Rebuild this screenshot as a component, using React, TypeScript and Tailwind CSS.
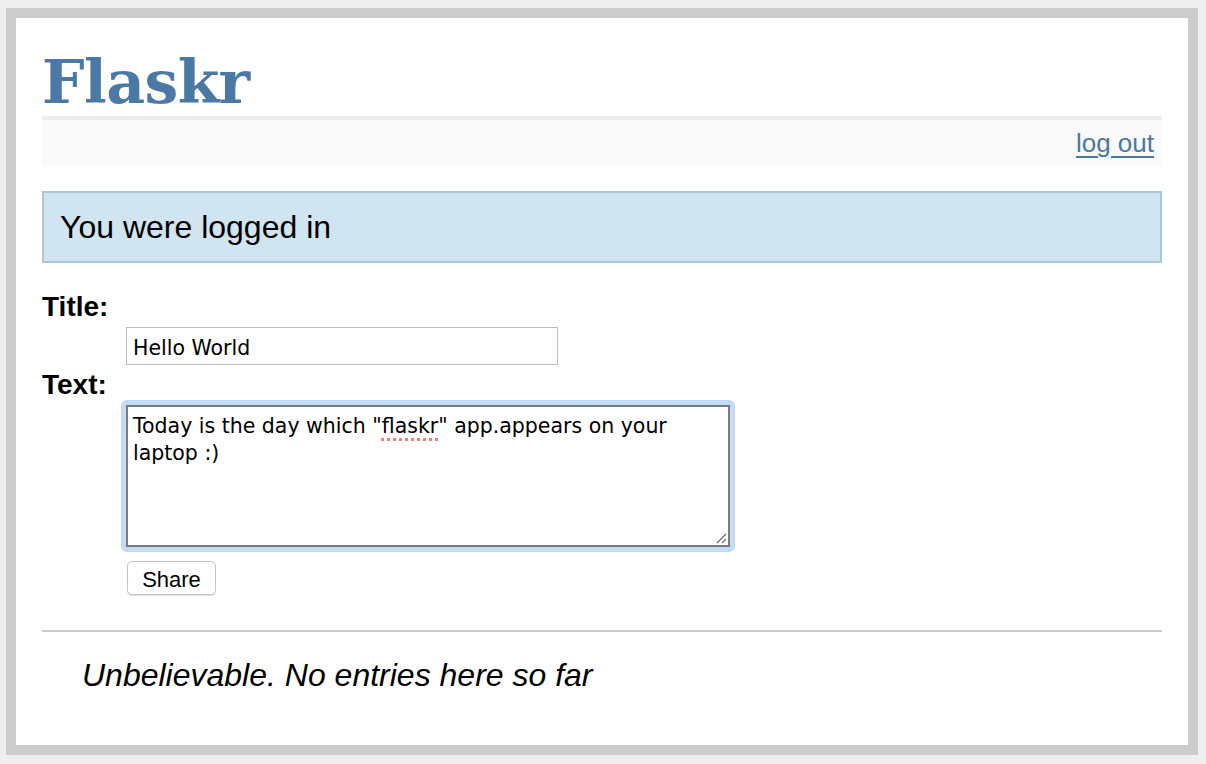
import React from "react";

export default function App() {
  return (
    <div className="h-[764px] w-full overflow-hidden bg-[#eeeeee] pt-[8px] font-['Liberation_Sans',Arial,sans-serif] text-black">
      <div className="ml-[6px] w-[1192px] border-[10px] border-[#cccccc] bg-white px-[26px] pt-[26px] pb-[26px]">
        <h1 className="h-[76px] border-b-4 border-[#eeeeee] pt-[2px] font-['DejaVu_Serif',Georgia,serif] text-[60px] font-bold leading-[72px] tracking-[-0.6px] text-[#4a79a5]">
          Flaskr
        </h1>
        <div className="mb-[26px] h-[45px] bg-[#fafafa] pr-[8px] pt-[8px] text-right text-[26px] leading-[30px]">
          <a href="#" className="text-[#4a79a5] underline decoration-[2px] underline-offset-[4px]">
            log out
          </a>
        </div>
        <div className="border-2 border-[#abc8df] bg-[#d1e4f2] px-[16px] py-[16px] text-[32px] leading-[36px]">
          You were logged in
        </div>
        <div className="border-b-2 border-[#cccccc]">
          <dl className="m-0 font-bold">
            <dt className="mt-[28px] text-[28px] leading-[32px]">Title:</dt>
            <dd className="ml-[84px] py-[4px] font-normal">
              <input
                type="text"
                defaultValue="Hello World"
                className="block h-[38px] w-[432px] border border-[#bdbdbd] bg-white px-[6px] pt-[3px] font-['DejaVu_Sans',sans-serif] text-[20.5px] text-black outline-none"
              />
            </dd>
            <dt className="text-[28px] leading-[31px]">Text:</dt>
            <dd className="ml-[79px] font-normal">
              <div className="w-[614px] rounded-[6px] bg-[#c2dbfa] p-[5px]">
                <div className="relative h-[142px] w-[604px] border-2 border-[#7a7a7a] bg-white px-[5px] pt-[6px] font-['DejaVu_Sans',sans-serif] text-[20.5px] leading-[27px] text-black">
                  {'Today is the day which "'}
                  <span className="underline decoration-[#e8837a] decoration-dotted decoration-[3px] underline-offset-[5px]">flaskr</span>
                  {'" app.appears on your laptop :)'}
                  <svg className="absolute bottom-[1px] right-[1px]" width="12" height="12" viewBox="0 0 12 12">
                    <line x1="11" y1="2" x2="2" y2="11" stroke="#6e6e6e" strokeWidth="1.3" />
                    <line x1="11" y1="7" x2="7" y2="11" stroke="#6e6e6e" strokeWidth="1.3" />
                  </svg>
                </div>
              </div>
            </dd>
            <dd className="ml-[85px] mt-[9px] mb-[35px] font-normal">
              <button
                type="button"
                className="h-[34px] w-[89px] rounded-[5px] border border-[#c4c4c4] bg-white pt-[3px] text-[22px] leading-[28px] text-black shadow-[0_1px_1px_rgba(0,0,0,0.12)]"
              >
                Share
              </button>
            </dd>
          </dl>
        </div>
        <ul className="m-0 list-none p-0">
          <li className="mx-[40px] mt-[25px] mb-[25px] text-[32px] leading-[37px]">
            <em>Unbelievable. No entries here so far</em>
          </li>
        </ul>
      </div>
    </div>
  );
}
